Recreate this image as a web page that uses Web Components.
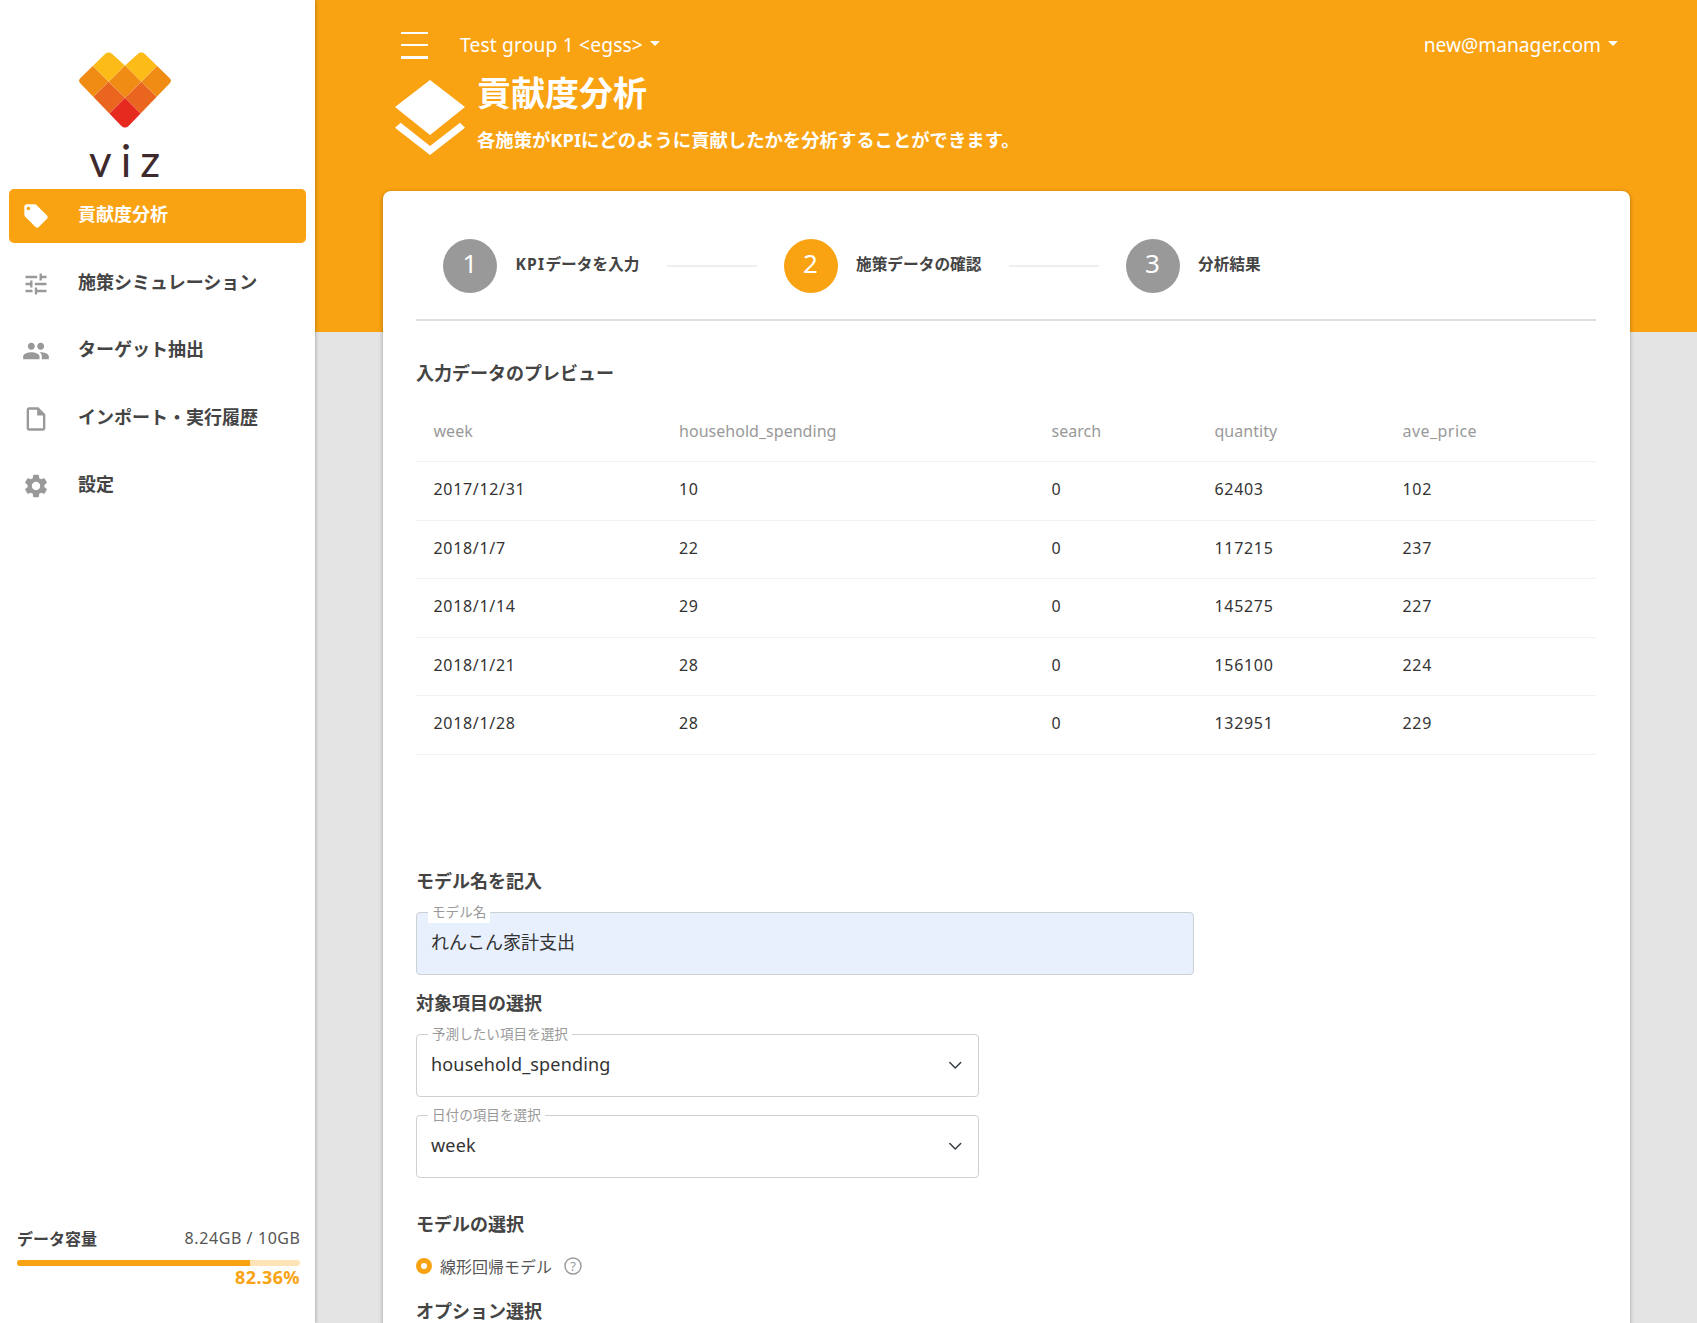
<!DOCTYPE html>
<html lang="ja"><head><meta charset="utf-8"><title>viz</title>
<style>
html,body{margin:0;padding:0;height:1323px;overflow:hidden;background:#e4e4e4}
body{font-family:"Noto Sans","Noto Sans CJK JP",sans-serif;color:#444}
</style></head>
<body>
<viz-app>
  <viz-sidebar slot="side">
    <viz-logo></viz-logo>
    <viz-nav-item active icon="tag">貢献度分析</viz-nav-item>
    <viz-nav-item icon="tune">施策シミュレーション</viz-nav-item>
    <viz-nav-item icon="people">ターゲット抽出</viz-nav-item>
    <viz-nav-item icon="file">インポート・実行履歴</viz-nav-item>
    <viz-nav-item icon="gear">設定</viz-nav-item>
    <viz-storage slot="bottom"></viz-storage>
  </viz-sidebar>
  <viz-header></viz-header>
  <viz-card>
    <viz-stepper></viz-stepper>
    <viz-heading style="margin-top:38px">入力データのプレビュー</viz-heading>
    <viz-table></viz-table>
    <viz-heading style="margin-top:112px">モデル名を記入</viz-heading>
    <viz-field label="モデル名" value="れんこん家計支出" filled style="margin-top:17px;width:778px"></viz-field>
    <viz-heading style="margin-top:14px">対象項目の選択</viz-heading>
    <viz-field label="予測したい項目を選択" value="household_spending" select style="margin-top:17px;width:563px"></viz-field>
    <viz-field label="日付の項目を選択" value="week" select style="margin-top:18px;width:563px"></viz-field>
    <viz-heading style="margin-top:32px">モデルの選択</viz-heading>
    <viz-radio style="margin-top:14px">線形回帰モデル</viz-radio>
    <viz-heading style="margin-top:17px">オプション選択</viz-heading>
  </viz-card>
</viz-app>
<script>
const ORANGE='#f9a212';
function def(name,html,init){
  customElements.define(name,class extends HTMLElement{
    constructor(){super();this.attachShadow({mode:'open'}).innerHTML=typeof html==='function'?html(this):html;}
    connectedCallback(){if(init)init(this,this.shadowRoot);}
  });
}
const ICONS={
 tag:'M21.41 11.58l-9-9C12.05 2.22 11.55 2 11 2H4c-1.1 0-2 .9-2 2v7c0 .55.22 1.05.59 1.42l9 9c.36.36.86.58 1.41.58.55 0 1.05-.22 1.41-.59l7-7c.37-.36.59-.86.59-1.41 0-.55-.23-1.06-.59-1.42zM5.5 7C4.67 7 4 6.33 4 5.5S4.67 4 5.5 4 7 4.67 7 5.5 6.33 7 5.5 7z',
 tune:'M3 17v2h6v-2H3zM3 5v2h10V5H3zm10 16v-2h8v-2h-8v-2h-2v6h2zM7 9v2H3v2h4v2h2V9H7zm14 4v-2H11v2h10zm-6-4h2V7h4V5h-4V3h-2v6z',
 people:'M16 11c1.66 0 2.99-1.34 2.99-3S17.66 5 16 5c-1.66 0-3 1.34-3 3s1.34 3 3 3zm-8 0c1.66 0 2.99-1.34 2.99-3S9.66 5 8 5C6.34 5 5 6.34 5 8s1.34 3 3 3zm0 2c-2.33 0-7 1.17-7 3.5V19h14v-2.5c0-2.33-4.67-3.5-7-3.5zm8 0c-.29 0-.62.02-.97.05 1.16.84 1.97 1.97 1.97 3.45V19h6v-2.5c0-2.33-4.67-3.5-7-3.5z',
 file:'M14 2H6c-1.1 0-1.99.9-1.99 2L4 20c0 1.1.89 2 1.99 2H18c1.1 0 2-.9 2-2V8l-6-6zM6 20V4h7v5h5v11H6z',
 gear:'M19.14 12.94c.04-.3.06-.61.06-.94 0-.32-.02-.64-.07-.94l2.03-1.58c.18-.14.23-.41.12-.61l-1.92-3.32c-.12-.22-.37-.29-.59-.22l-2.39.96c-.5-.38-1.03-.7-1.62-.94l-.36-2.54c-.04-.24-.24-.41-.48-.41h-3.84c-.24 0-.43.17-.47.41l-.36 2.54c-.59.24-1.13.57-1.62.94l-2.39-.96c-.22-.08-.47 0-.59.22L2.74 8.87c-.12.21-.08.47.12.61l2.03 1.58c-.05.3-.09.63-.09.94s.02.64.07.94l-2.03 1.58c-.18.14-.23.41-.12.61l1.92 3.32c.12.22.37.29.59.22l2.39-.96c.5.38 1.03.7 1.62.94l.36 2.54c.05.24.24.41.48.41h3.84c.24 0 .44-.17.47-.41l.36-2.54c.59-.24 1.13-.56 1.62-.94l2.39.96c.22.08.47 0 .59-.22l1.92-3.32c.12-.22.07-.47-.12-.61l-2.01-1.58zM12 15.6c-1.98 0-3.6-1.62-3.6-3.6s1.62-3.6 3.6-3.6 3.6 1.62 3.6 3.6-1.62 3.6-3.6 3.6z'
};

def('viz-app',`<style>
:host{display:grid;grid-template-columns:315px 1fr;width:1697px;height:1323px;overflow:hidden}
main{background:linear-gradient(${ORANGE} 332px,#e4e4e4 332px);min-width:0}
</style><slot name="side"></slot><main><slot></slot></main>`);

def('viz-sidebar',`<style>
:host{display:flex;flex-direction:column;height:1323px;background:#fff;box-shadow:1px 0 3px rgba(0,0,0,.22);position:relative;z-index:1;padding:0 9px;box-sizing:border-box}
nav{display:flex;flex-direction:column;gap:13.5px}
.b{margin-top:auto;margin-left:-9px;margin-right:-9px}
</style><nav><slot></slot></nav><div class="b"><slot name="bottom"></slot></div>`);

def('viz-logo',`<style>
:host{display:flex;flex-direction:column;align-items:center;height:175.5px;box-sizing:border-box;padding:51px 66px 0 0;color:#3e2a2c}
svg{width:94px;height:78px;display:block;flex:none}
.t{font:400 44px/44px Lato,sans-serif;letter-spacing:9px;margin:9px -9px 0 0;height:44px;color:#3e2a2c}
</style>
<svg viewBox="55 68 276 228"><defs><clipPath id="h"><path d="M133 78Q145 65 157 78L193 110L229 78Q241 65 253 78L323 146Q333 155 323 164L205 286Q193 299 181 286L63 164Q53 155 63 146Z"/></clipPath></defs>
<g clip-path="url(#h)" stroke="#fff" stroke-opacity=".25" stroke-width=".8">
<polygon fill="#fcbb17" points="145,60 97,110 145,158 193,110"/>
<polygon fill="#fcbb17" points="241,60 193,110 241,158 289,110"/>
<polygon fill="#f08c13" points="97,110 50,157 97,205 145,158"/>
<polygon fill="#f08c13" points="193,110 145,158 193,205 241,158"/>
<polygon fill="#f08c13" points="289,110 241,158 289,205 336,157"/>
<polygon fill="#ea661f" points="145,158 97,205 145,253 193,205"/>
<polygon fill="#ea661f" points="241,158 193,205 241,253 289,205"/>
<polygon fill="#e72a20" points="193,205 145,253 193,300 241,253"/>
</g></svg><div class="t">viz</div>`);

def('viz-nav-item',el=>{
 const on=el.hasAttribute('active');
 return `<style>
:host{display:flex;align-items:center;height:54px;border-radius:5px;background:${on?ORANGE:'transparent'};color:${on?'#fff':'#444'};font-weight:700;font-size:18px;padding-left:13px;box-sizing:border-box}
svg{width:28px;height:28px;fill:${on?'#fff':'#999'};flex:none;margin-right:28px}
span{padding-bottom:6px}
</style><svg viewBox="0 0 24 24"><path d="${ICONS[el.getAttribute('icon')]}"/></svg><span><slot></slot></span>`});

def('viz-storage',`<style>
:host{display:block;padding:0 15px 35px 17px;color:#444}
.r{display:flex;justify-content:space-between;align-items:center;height:24px}
b{font-size:16px}
span{font-size:16px;color:#555;letter-spacing:.58px;margin-right:-.58px}
.bar{height:6px;border-radius:3px;background:#fde3b5;margin-top:10px;overflow:hidden}
.bar i{display:block;height:6px;width:82.36%;background:${ORANGE}}
.p{text-align:right;color:${ORANGE};font-weight:700;font-size:18px;line-height:22px;letter-spacing:.4px}
</style><div class="r"><b>データ容量</b><span>8.24GB / 10GB</span></div><div class="bar"><i></i></div><div class="p">82.36%</div>`);

def('viz-header',`<style>
:host{display:block;height:191px;box-sizing:border-box;padding:20px 79px 0 80px;color:#fff}
.top{display:flex;align-items:center;height:50px;font-size:19.2px;padding-left:6px}
.ham{width:27px;height:27px;display:flex;flex-direction:column;justify-content:space-between;margin-right:32px}
.ham i{display:block;height:2.5px;background:#fff}
.dd{display:inline-flex;align-items:center;position:relative;top:-1px}
.g{letter-spacing:.17px}
.dd::after{content:"";margin-left:7px;margin-top:-2px;border-top:5.4px solid #fff;border-left:5.4px solid transparent;border-right:5.4px solid transparent}
.sp{flex:1}
.ti{display:flex;align-items:flex-start;gap:12px}
svg{width:70px;height:75px;margin-top:10px;flex:none;fill:#fff}
h1{margin:0;font-size:34px;line-height:46px;font-weight:700}
p{margin:10px 0 0;font-size:18.35px;font-weight:700;line-height:28px;white-space:nowrap}
</style>
<div class="top"><div class="ham"><i></i><i></i><i></i></div><span class="dd g">Test group 1 &lt;egss&gt;</span><span class="sp"></span><span class="dd">new@manager.com</span></div>
<div class="ti"><svg viewBox="395 80 70 75"><polygon points="430,80 465,107 430,135 395,107"/><polygon points="395,127.7 400.7,122.7 430,146 460,122.7 465,127.7 430,155"/></svg>
<div><h1>貢献度分析</h1><p>各施策がKPIにどのように貢献したかを分析することができます。</p></div></div>`);

def('viz-card',`<style>
:host{display:block;margin:0 67px 0 68px;background:#fff;border-radius:8px 8px 0 0;box-shadow:0 1px 4px rgba(0,0,0,.3);padding:0 34px 0 33px;height:1200px;box-sizing:border-box}
</style><slot></slot>`);

def('viz-stepper',`<style>
:host{display:flex;align-items:center;padding:48px 0 26px 27px;border-bottom:2px solid #e0e0e0;height:54px;box-sizing:content-box}
.c{width:54px;height:54px;border-radius:50%;background:#999;color:#fff;display:flex;align-items:center;justify-content:center;font-size:26px;flex:none;padding-bottom:6px;box-sizing:border-box}
.c.a{background:${ORANGE}}
b{font-size:15.7px;margin-left:18.5px;color:#444;position:relative;top:-3px;white-space:nowrap}
b span{letter-spacing:1.2px}
i{display:block;height:2px;background:#eee;flex:none;width:90px;margin:0 27px}
</style>
<div class="c">1</div><b><span>KPI</span>データを入力</b><i></i>
<div class="c a">2</div><b>施策データの確認</b><i></i>
<div class="c">3</div><b>分析結果</b>`);

def('viz-heading',`<style>
:host{display:block;font-size:18px;font-weight:700;line-height:28px;color:#444}
</style><slot></slot>`);

const HEAD=['week','household_spending','search','quantity','ave_price'];
const ROWS=[['2017/12/31',10,0,62403,102],['2018/1/7',22,0,117215,237],['2018/1/14',29,0,145275,227],['2018/1/21',28,0,156100,224],['2018/1/28',28,0,132951,229]];
def('viz-table',`<style>
:host{display:block;margin-top:17px;font-size:16px;color:#333}
.row{display:grid;grid-template-columns:245.5px 372.5px 163px 188px 1fr;height:58.5px;align-items:center;border-bottom:1px solid #f1f1f1;box-sizing:border-box;padding-bottom:3px;letter-spacing:.68px}
.row span{padding-left:17.5px}
.h{color:#999;height:58px;padding-bottom:3px;letter-spacing:.03px}
.h span:last-child{letter-spacing:.45px}
</style>
<div class="row h">${HEAD.map(h=>`<span>${h}</span>`).join('')}</div>
${ROWS.map(r=>`<div class="row">${r.map(c=>`<span>${c}</span>`).join('')}</div>`).join('')}`);

def('viz-field',el=>{
 const filled=el.hasAttribute('filled'),sel=el.hasAttribute('select');
 return `<style>
:host{display:block;position:relative;height:63px;box-sizing:border-box;border:1px solid #ccd0d5;border-radius:4px;background:${filled?'#e8f0fe':'#fff'}}
.in{display:flex;align-items:center;height:100%;padding:0 14px ${filled?5:3}px;box-sizing:border-box;font-size:18px;color:#333;justify-content:space-between;letter-spacing:${sel?.17:0}px}
label{position:absolute;left:11px;top:-12px;padding:0 4px;font-size:13.6px;line-height:22px;color:#999;background:#fff}
svg{width:14.5px;height:14.5px;fill:none;stroke:#343a40;stroke-width:1.6;stroke-linecap:round;stroke-linejoin:round;margin-right:2px;margin-top:3px}
</style><label>${el.getAttribute('label')}</label><div class="in"><span>${el.getAttribute('value')}</span>${sel?'<svg viewBox="0 0 16 16"><path d="M2 5l6 6 6-6"/></svg>':''}</div>`});

def('viz-radio',`<style>
:host{display:flex;align-items:center;height:28px;font-size:16px;color:#555}
.d{width:16px;height:16px;border-radius:50%;border:5px solid ${ORANGE};box-sizing:border-box;background:#fff;margin-right:8px}
svg{width:18px;height:18px;margin-left:12px;fill:none;stroke:#999;stroke-width:1.4}
text{fill:#999;stroke:none;font-size:13px;font-family:"Noto Sans",sans-serif}
</style><span class="d"></span><span><slot></slot></span>
<svg viewBox="0 0 18 18"><circle cx="9" cy="9" r="8"/><text x="9" y="13.5" text-anchor="middle">?</text></svg>`);
</script>
</body></html>
